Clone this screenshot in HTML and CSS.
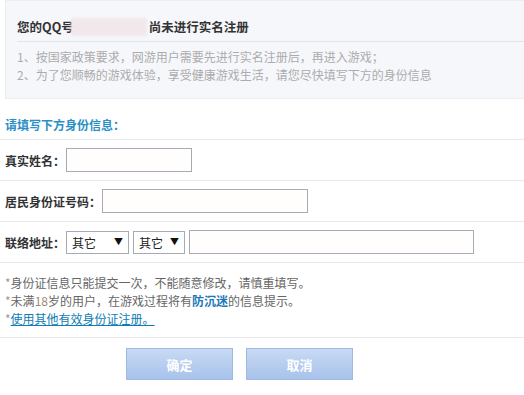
FILE: index.html
```html
<!DOCTYPE html>
<html>
<head>
    <meta charset="utf-8">
    <title>实名注册</title>
    <link rel="stylesheet" href="styles.css">
</head>
<body>
    <div class="notice">
        <div class="notice-title">您的QQ号<span class="qq-mask"></span>尚未进行实名注册</div>
        <div class="notice-list">
            <div>1、按国家政策要求，网游用户需要先进行实名注册后，再进入游戏；</div>
            <div>2、为了您顺畅的游戏体验，享受健康游戏生活，请您尽快填写下方的身份信息</div>
        </div>
    </div>

    <form class="id-form">
        <div class="form-head">请填写下方身份信息：</div>

        <div class="form-row">
            <label class="form-label" for="real-name">真实姓名：</label>
            <input type="text" id="real-name" class="text-input name-input">
        </div>

        <div class="form-row">
            <label class="form-label" for="id-number">居民身份证号码：</label>
            <input type="text" id="id-number" class="text-input id-input">
        </div>

        <div class="form-row">
            <label class="form-label" for="province">联络地址：</label>
            <span class="select-wrap province">
                <select id="province"><option>其它</option></select>
            </span>
            <span class="select-wrap city">
                <select id="city"><option>其它</option></select>
            </span>
            <input type="text" id="address" class="text-input address-input">
        </div>

        <div class="form-notes">
            <div><span class="star">*</span>身份证信息只能提交一次，不能随意修改，请慎重填写。</div>
            <div><span class="star">*</span>未满<span class="age">18</span>岁的用户，在游戏过程将有<b class="fcm">防沉迷</b>的信息提示。</div>
            <div><span class="star">*</span><a href="#" class="other-id">使用其他有效身份证注册。</a></div>
        </div>

        <div class="form-actions">
            <button type="button" class="action-btn">确定</button>
            <button type="button" class="action-btn">取消</button>
        </div>
    </form>
</body>
</html>
```

FILE: styles.css
```css
body {
    margin: 0;
    background: #fff;
    font-family: "Noto Sans CJK SC", "Liberation Sans", sans-serif;
    font-size: 12px;
    color: #666;
}

.notice {
    margin-left: 5px;
    height: 97px;
    background: #f6f7fb;
    border: 1px solid #eceef4;
    border-right: none;
}

.notice-title {
    margin: 0 0 0 11px;
    padding: 16px 0 4px;
    line-height: 20px;
    font-size: 12.5px;
    font-weight: bold;
    color: #333;
    border-bottom: 1px solid #e2e4ec;
    display: flex;
    align-items: center;
}

.qq-mask {
    display: inline-block;
    width: 76px;
    height: 18px;
    margin: 0 2px 0 -3px;
    background: #f1e8ec;
    filter: blur(1px);
}

.notice-list {
    padding: 6px 0 0 11px;
    line-height: 18px;
    color: #acacac;
}

.form-head {
    padding: 17px 5px 5px;
    line-height: 18px;
    font-weight: bold;
    color: #2a8fc6;
    border-bottom: 1px solid #e8e8e8;
}

.form-row {
    display: flex;
    align-items: center;
    height: 40px;
    padding: 0 5px;
    border-bottom: 1px solid #e8e8e8;
}

.form-label {
    font-weight: bold;
    color: #333;
    margin-right: 1px;
}

.text-input {
    box-sizing: border-box;
    height: 24px;
    border: 1px solid #a8aab6;
    background: #fffefc;
    padding: 0 4px;
    outline: none;
}

.name-input {
    width: 126px;
}

.id-input {
    width: 206px;
}

.address-input {
    width: 285px;
}

.select-wrap {
    position: relative;
    margin-right: 4px;
}

.select-wrap select {
    box-sizing: border-box;
    height: 23px;
    border: 1px solid #a8aab6;
    border-radius: 0;
    background: #fff;
    padding: 0 0 0 5px;
    font-family: inherit;
    font-size: 12px;
    color: #222;
    -webkit-appearance: none;
    appearance: none;
    outline: none;
}

.select-wrap::after {
    content: "▼";
    position: absolute;
    right: 6px;
    top: 4px;
    font-size: 9px;
    color: #111;
    pointer-events: none;
}

.province select {
    width: 63px;
}

.city select {
    width: 52px;
}

.form-notes {
    padding: 11px 5px 9px;
    line-height: 18px;
    color: #666;
    border-bottom: 1px solid #e8e8e8;
}

.star {
    color: #999;
}

.age {
    color: #9c8a6e;
}

.fcm {
    color: #1b78b6;
}

.other-id {
    color: #0d7cb4;
}

.form-actions {
    display: flex;
    gap: 13px;
    padding: 10px 0 0 126px;
}

.action-btn {
    width: 107px;
    height: 32px;
    border: 1px solid #a0b9e0;
    background: linear-gradient(#c8daf4, #a8c2eb);
    color: #fff;
    font-family: inherit;
    font-size: 13px;
    font-weight: bold;
    cursor: pointer;
}
```
